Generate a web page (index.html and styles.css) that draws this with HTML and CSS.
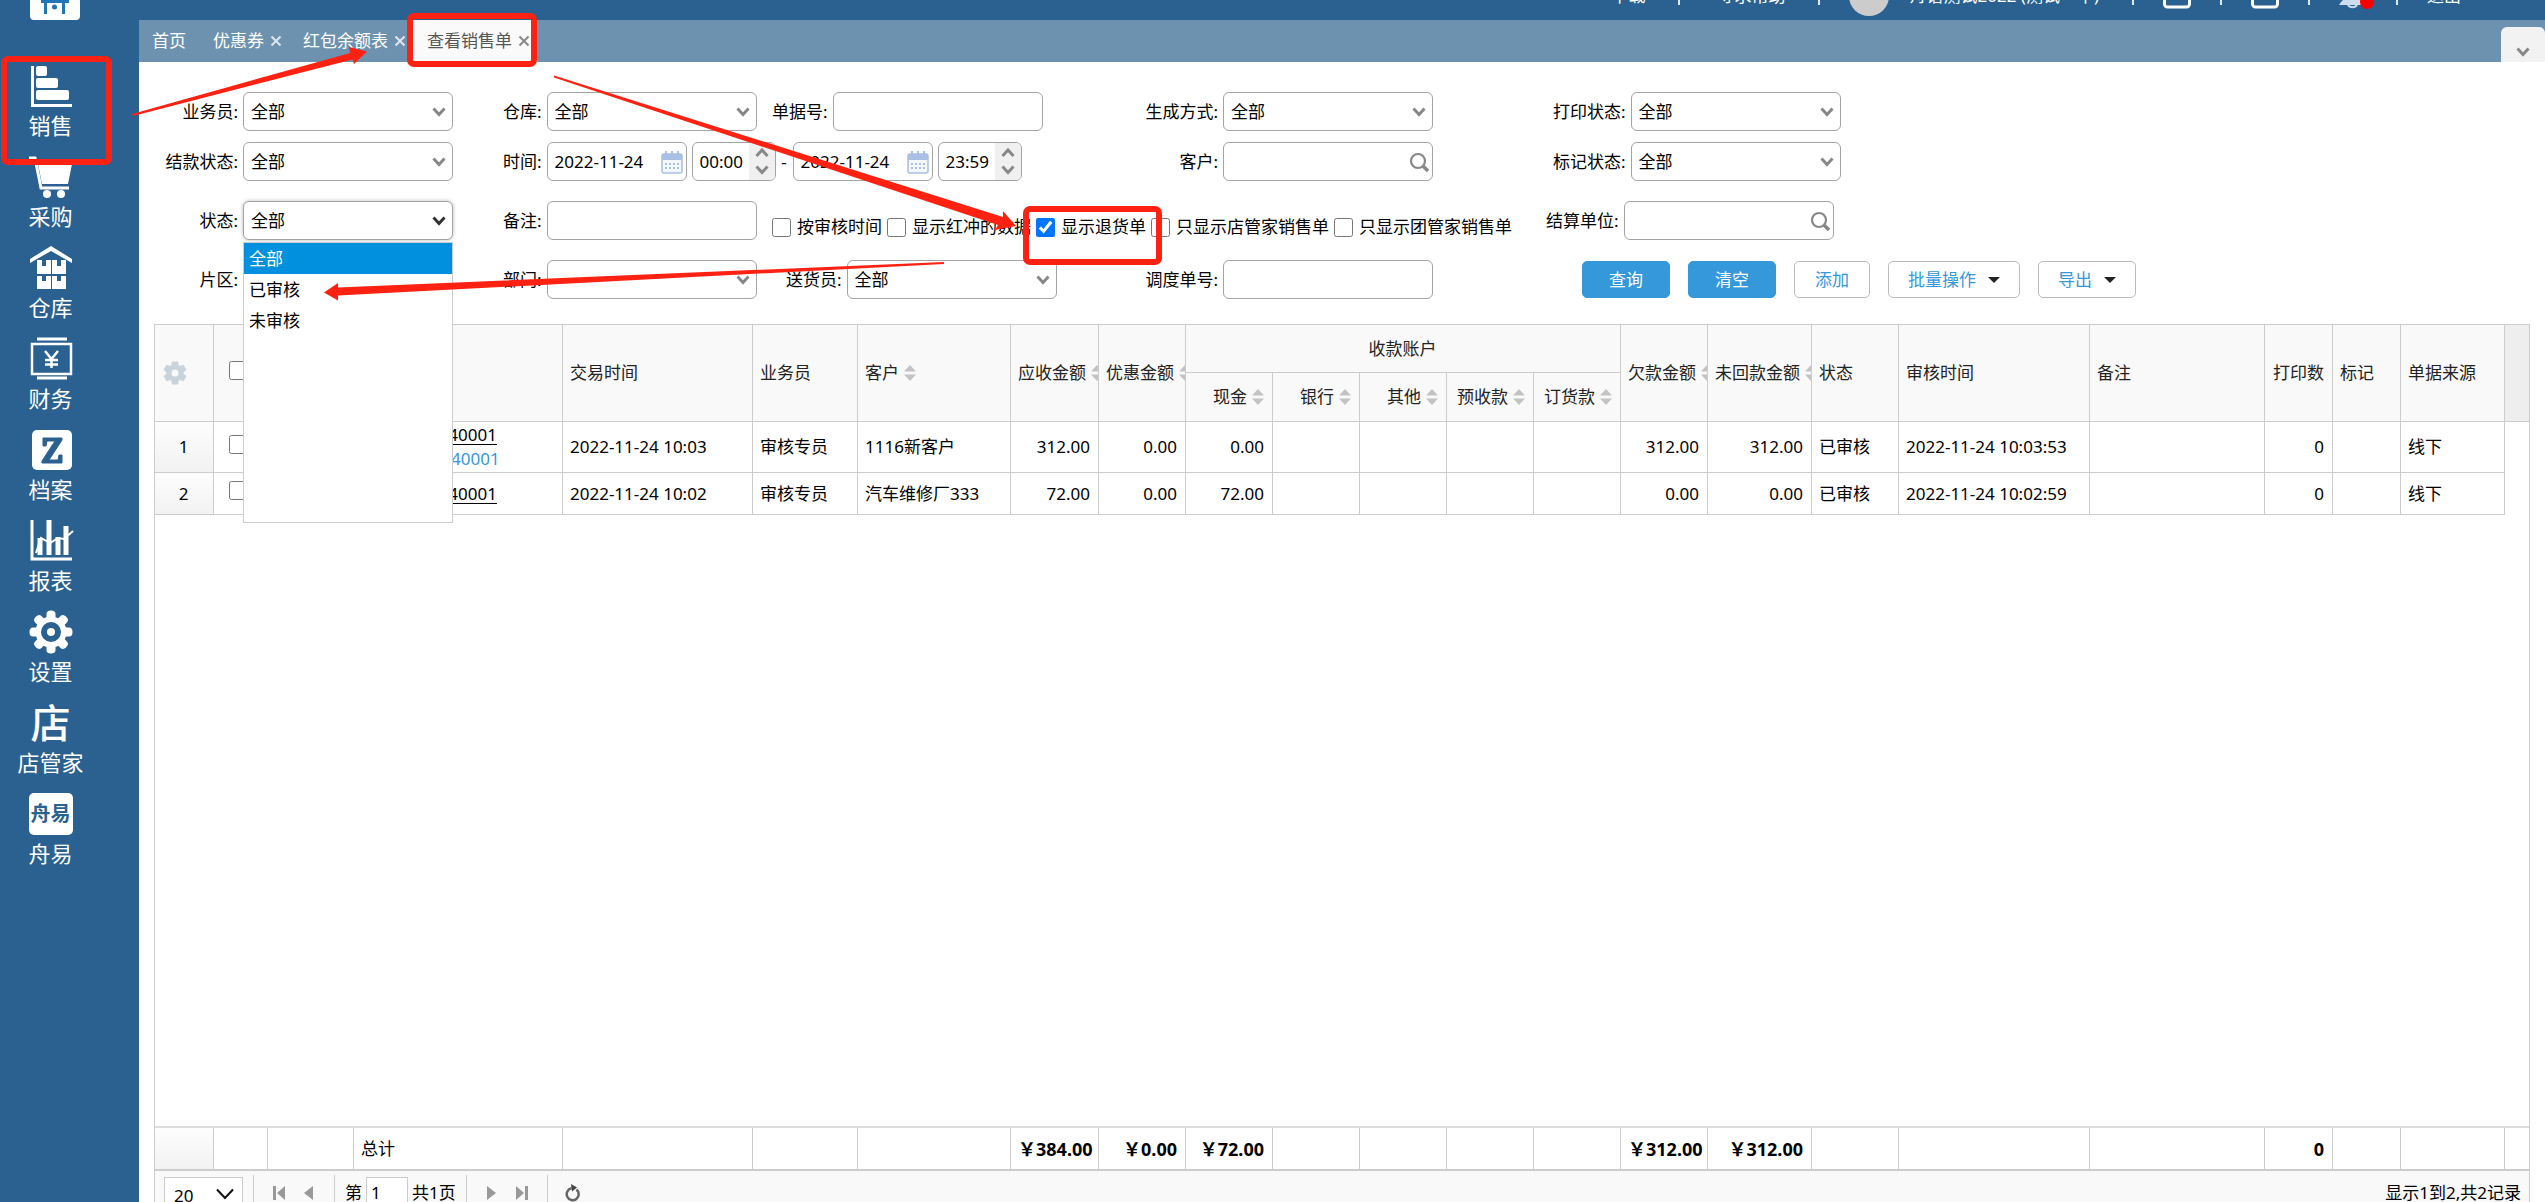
FILE: index.html
```html
<!DOCTYPE html>
<html lang="zh-CN">
<head>
<meta charset="utf-8">
<title>查看销售单</title>
<link rel="stylesheet" href="styles.css">
</head>
<body>
<svg class="defs" aria-hidden="true">
  <symbol id="chev" viewBox="0 0 14 10"><path d="M1.5 1.5 7 7.5l5.500-6" fill="none" stroke="currentColor" stroke-width="3"/></symbol>
  <symbol id="chev-thin" viewBox="0 0 18 12"><path d="M1 1.500l8 8.500 8-8.500" fill="none" stroke="currentColor" stroke-width="2"/></symbol>
  <symbol id="chev-up" viewBox="0 0 14 10"><path d="M1.500 8 7 2l5.500 6" fill="none" stroke="currentColor" stroke-width="3"/></symbol>
  <symbol id="close" viewBox="0 0 12 12"><path d="M1.500 1.500l9 9m0-9l-9 9" stroke="currentColor" stroke-width="2"/></symbol>
  <symbol id="search" viewBox="0 0 20 20"><circle cx="9" cy="9" r="7" fill="none" stroke="#888" stroke-width="2.200"/><path d="M14 14l5 5" stroke="#888" stroke-width="3.500"/></symbol>
  <symbol id="sort" viewBox="0 0 12 16"><path d="M6 0l6 6.500H0zM6 16l6-6.500H0z" fill="#c3c3c3"/></symbol>
  <symbol id="cal" viewBox="0 0 22 23"><rect x="1" y="3" width="20" height="19" rx="2" fill="#f4f7fc" stroke="#a9bfe3" stroke-width="1.500"/><path d="M1 3h20v6H1z" fill="#a9bfe3"/><path d="M5 0v5M11 0v5M17 0v5" stroke="#a9bfe3" stroke-width="2"/><path d="M4 13h14M4 17h14" stroke="#a9bfe3" stroke-width="2" stroke-dasharray="2 2"/></symbol>
</svg>

<div class="app">
  <aside class="sidebar">
    <div class="logo"><svg width="50" height="20" viewBox="0 0 50 20"><rect y="-10" width="50" height="30" rx="4" fill="#fff"/><path d="M11 1.500h28M15.500 1v13M33.500 1v13" stroke="#1f76b8" stroke-width="3" fill="none"/><circle cx="24.500" cy="7" r="2.500" fill="#1f76b8"/></svg></div>
    <nav>
      <a href="#"><svg width="44" height="42" viewBox="0 0 44 42" fill="#fff"><path d="M2 1h3v38h38v3H2z"/><rect x="7" y="1" width="11" height="10" rx="2"/><rect x="7" y="13" width="22" height="10" rx="2"/><rect x="7" y="25" width="33" height="10" rx="2"/></svg><span>销售</span></a>
      <a href="#"><svg width="44" height="42" viewBox="0 0 44 42"><path d="M0 2h6l6 30h28" fill="none" stroke="#fff" stroke-width="3"/><path d="M9 8h34l-4 20H13z" fill="#fff"/><circle cx="18" cy="38" r="4" fill="#fff"/><circle cx="32" cy="38" r="4" fill="#fff"/></svg><span>采购</span></a>
      <a href="#"><svg width="44" height="42" viewBox="0 0 44 42" fill="#fff"><path d="M1 12L22-1l21 13v4L22 4 1 16z"/><path d="M8 13h5v6h4v-6h5v14H8zM23 13h5v6h4v-6h5v14H23zM8 29h5v5h4v-5h5v13H8zM23 29h5v5h4v-5h5v13H23z"/></svg><span>仓库</span></a>
      <a href="#"><svg width="44" height="42" viewBox="0 0 44 42"><path d="M8 1h30M8 40h30" stroke="#fff" stroke-width="3"/><rect x="3" y="6" width="39" height="30" fill="none" stroke="#fff" stroke-width="2.500"/><path d="M16 13l6.500 8 6.500-8M22.500 21v9M16 22h13M16 26.500h13" fill="none" stroke="#fff" stroke-width="2.500"/></svg><span>财务</span></a>
      <a href="#"><svg width="44" height="42" viewBox="0 0 44 42"><rect x="3" y="1" width="40" height="40" rx="5" fill="#fff"/><path d="M14 9h19v2L20 31h9l1-5h3v8H13v-2L26 12h-8l-1 5h-3z" fill="#2a6190" stroke="#2a6190"/></svg><span>档案</span></a>
      <a href="#"><svg width="44" height="42" viewBox="0 0 44 42" fill="none" stroke="#fff"><path d="M3 0v39h40" stroke-width="3"/><path d="M11 18v17M20 0v35M29 17v18M37 6v29" stroke-width="5"/><path d="M7 33l5-15 9 5 8-5 6 1 9-8" stroke-width="2"/></svg><span>报表</span></a>
      <a href="#"><svg width="44" height="42" viewBox="-22 -21 44 42"><g fill="#fff"><circle r="15.500"/><path id="tooth" d="M-4.500-18a4.500 3.500 0 0 1 9 0v6h-9z"/><use href="#tooth" transform="rotate(45)"/><use href="#tooth" transform="rotate(90)"/><use href="#tooth" transform="rotate(135)"/><use href="#tooth" transform="rotate(180)"/><use href="#tooth" transform="rotate(225)"/><use href="#tooth" transform="rotate(270)"/><use href="#tooth" transform="rotate(315)"/></g><circle r="7" fill="#fff" stroke="#2a6190" stroke-width="6"/></svg><span>设置</span></a>
      <a href="#"><b class="glyph" aria-hidden="true">店</b><span>店管家</span></a>
      <a href="#"><b class="glyph glyph-box" aria-hidden="true">舟易</b><span>舟易</span></a>
    </nav>
  </aside>

  <div class="main">
    <header class="topbar">
      <div class="topnav">
        <a href="#">下载</a><i></i><a href="#">寻求帮助</a><i></i>
        <span class="avatar"></span><span class="user">舟谱测试2022 (测试一中)</span><i></i>
        <svg width="28" height="28" viewBox="0 0 28 28"><rect x="1.500" y="4" width="25" height="21" rx="3" fill="none" stroke="#fff" stroke-width="3"/></svg><i></i>
        <svg width="28" height="28" viewBox="0 0 28 28"><rect x="1.500" y="4" width="25" height="21" rx="3" fill="none" stroke="#fff" stroke-width="3"/></svg><i></i>
        <svg width="28" height="28" viewBox="0 0 28 28"><path d="M2 20c4-3 3-8 4-12 1-6 15-6 16 0 1 4 0 9 4 12v3H0z" fill="#cfdcee"/><path d="M9 23a5 4 0 0 0 9 0" fill="none" stroke="#cfdcee" stroke-width="2"/><circle cx="28" cy="20" r="7" fill="#f00"/></svg><i></i>
        <a href="#">退出</a>
      </div>
    </header>

    <div class="tabs">
      <a class="tab home" href="#">首页</a>
      <a class="tab" href="#">优惠券<svg><use href="#close"/></svg></a>
      <a class="tab" href="#">红包余额表<svg><use href="#close"/></svg></a>
      <a class="tab active" href="#">查看销售单<svg><use href="#close"/></svg></a>
      <button class="collapse" aria-label="展开"><svg><use href="#chev"/></svg></button>
    </div>

    <main class="content">
      <form class="filters">
        <div class="row">
          <div class="field c1"><label for="f1">业务员:</label><span class="box"><select id="f1"><option>全部</option></select><svg class="chev"><use href="#chev"/></svg></span></div>
          <div class="field c2"><label for="f2">仓库:</label><span class="box"><select id="f2"><option>全部</option></select><svg class="chev"><use href="#chev"/></svg></span></div>
          <div class="field c3"><label for="f3">单据号:</label><span class="box"><input id="f3" type="text"></span></div>
          <div class="field c4"><label for="f4">生成方式:</label><span class="box"><select id="f4"><option>全部</option></select><svg class="chev"><use href="#chev"/></svg></span></div>
          <div class="field c5"><label for="f5">打印状态:</label><span class="box"><select id="f5"><option>全部</option></select><svg class="chev"><use href="#chev"/></svg></span></div>
        </div>
        <div class="row">
          <div class="field c1"><label for="f6">结款状态:</label><span class="box"><select id="f6"><option>全部</option></select><svg class="chev"><use href="#chev"/></svg></span></div>
          <div class="field time"><label for="f7">时间:</label>
            <span class="box date"><input id="f7" type="text" value="2022-11-24"><svg class="cal"><use href="#cal"/></svg></span>
            <span class="box clock"><input type="text" value="00:00" aria-label="开始时间"><span class="spin"><svg><use href="#chev-up"/></svg><svg><use href="#chev"/></svg></span></span>
            <span class="dash">-</span>
            <span class="box date"><input type="text" value="2022-11-24" aria-label="结束日期"><svg class="cal"><use href="#cal"/></svg></span>
            <span class="box clock"><input type="text" value="23:59" aria-label="结束时间"><span class="spin"><svg><use href="#chev-up"/></svg><svg><use href="#chev"/></svg></span></span>
          </div>
          <div class="field c4"><label for="f8">客户:</label><span class="box"><input id="f8" type="text"><svg class="mag"><use href="#search"/></svg></span></div>
          <div class="field c5"><label for="f9">标记状态:</label><span class="box"><select id="f9"><option>全部</option></select><svg class="chev"><use href="#chev"/></svg></span></div>
        </div>
        <div class="row spaced">
          <div class="field c1"><label for="f10">状态:</label><span class="box open"><select id="f10"><option>全部</option><option>已审核</option><option>未审核</option></select><svg class="chev"><use href="#chev"/></svg>
            <ul class="dropdown"><li class="on">全部</li><li>已审核</li><li>未审核</li></ul></span></div>
          <div class="field c2"><label for="f11">备注:</label><span class="box"><input id="f11" type="text"></span></div>
          <div class="flow c3">
            <div class="checks">
              <label><input type="checkbox">按审核时间</label>
              <label><input type="checkbox">显示红冲的数据</label>
              <label><input type="checkbox" checked>显示退货单</label>
              <label><input type="checkbox">只显示店管家销售单</label>
              <label><input type="checkbox">只显示团管家销售单</label>
            </div>
            <div class="field"><label for="f12">结算单位:</label><span class="box"><input id="f12" type="text"><svg class="mag"><use href="#search"/></svg></span></div>
          </div>
        </div>
        <div class="row spaced">
          <div class="field c1"><label for="f13">片区:</label><span class="box"><select id="f13"><option></option></select></span></div>
          <div class="field c2"><label for="f14">部门:</label><span class="box"><select id="f14"><option></option></select><svg class="chev"><use href="#chev"/></svg></span></div>
          <div class="field c3 inset"><label for="f15">送货员:</label><span class="box"><select id="f15"><option>全部</option></select><svg class="chev"><use href="#chev"/></svg></span></div>
          <div class="field c4"><label for="f16">调度单号:</label><span class="box"><input id="f16" type="text"></span></div>
          <div class="actions">
            <button type="button" class="btn primary">查询</button>
            <button type="button" class="btn primary">清空</button>
            <button type="button" class="btn">添加</button>
            <button type="button" class="btn menu">批量操作<span class="caret"></span></button>
            <button type="button" class="btn menu">导出<span class="caret"></span></button>
          </div>
        </div>
      </form>

      <section class="grid">
        <table class="data">
          <colgroup><col class="w59"><col class="w54"><col class="w86"><col class="w209"><col class="w190"><col class="w105"><col class="w153"><col class="w88"><col class="w87" span="7"><col class="w104"><col class="w87"><col class="w191"><col class="w175"><col class="w68" span="2"><col class="w104"><col></colgroup>
          <thead>
            <tr>
              <th rowspan="2" class="gear"><svg width="24" height="24" viewBox="-12 -12 24 24"><g fill="#c9d3dc"><circle r="8.500"/><path id="gt" d="M-3-11.500h6l1 5h-8z"/><use href="#gt" transform="rotate(60)"/><use href="#gt" transform="rotate(120)"/><use href="#gt" transform="rotate(180)"/><use href="#gt" transform="rotate(240)"/><use href="#gt" transform="rotate(300)"/></g><circle r="3.500" fill="#f9f9f9"/></svg></th>
              <th rowspan="2" class="pick"><input type="checkbox" aria-label="全选"></th>
              <th rowspan="2"></th><th rowspan="2">单据号</th><th rowspan="2">交易时间</th><th rowspan="2">业务员</th>
              <th rowspan="2">客户<svg class="sort"><use href="#sort"/></svg></th>
              <th rowspan="2">应收金额<svg class="sort"><use href="#sort"/></svg></th>
              <th rowspan="2">优惠金额<svg class="sort"><use href="#sort"/></svg></th>
              <th colspan="5" class="mid">收款账户</th>
              <th rowspan="2">欠款金额<svg class="sort"><use href="#sort"/></svg></th>
              <th rowspan="2">未回款金额<svg class="sort"><use href="#sort"/></svg></th>
              <th rowspan="2">状态</th><th rowspan="2">审核时间</th><th rowspan="2">备注</th>
              <th rowspan="2" class="num">打印数</th><th rowspan="2">标记</th><th rowspan="2">单据来源</th><th rowspan="2" class="gutter"></th>
            </tr>
            <tr class="sub">
              <th class="num">现金<svg class="sort"><use href="#sort"/></svg></th>
              <th class="num">银行<svg class="sort"><use href="#sort"/></svg></th>
              <th class="num">其他<svg class="sort"><use href="#sort"/></svg></th>
              <th class="num">预收款<svg class="sort"><use href="#sort"/></svg></th>
              <th class="num">订货款<svg class="sort"><use href="#sort"/></svg></th>
            </tr>
          </thead>
          <tbody>
            <tr class="tall">
              <td class="no">1</td><td class="pick"><input type="checkbox" aria-label="选择第1行"></td><td></td>
              <td class="docs"><a href="#">XS202211240001</a><a class="ref" href="#">TH202211240001</a></td>
              <td>2022-11-24 10:03</td><td>审核专员</td><td>1116新客户</td>
              <td class="num">312.00</td><td class="num">0.00</td><td class="num">0.00</td><td></td><td></td><td></td><td></td>
              <td class="num">312.00</td><td class="num">312.00</td><td>已审核</td><td>2022-11-24 10:03:53</td><td></td><td class="num">0</td><td></td><td>线下</td><td class="gutter"></td>
            </tr>
            <tr>
              <td class="no">2</td><td class="pick"><input type="checkbox" aria-label="选择第2行"></td><td></td>
              <td class="docs"><a href="#">XS202211240001</a></td>
              <td>2022-11-24 10:02</td><td>审核专员</td><td>汽车维修厂333</td>
              <td class="num">72.00</td><td class="num">0.00</td><td class="num">72.00</td><td></td><td></td><td></td><td></td>
              <td class="num">0.00</td><td class="num">0.00</td><td>已审核</td><td>2022-11-24 10:02:59</td><td></td><td class="num">0</td><td></td><td>线下</td><td class="gutter"></td>
            </tr>
          </tbody>
        </table>
        <div class="blank"></div>
        <table class="data totals">
          <colgroup><col class="w59"><col class="w54"><col class="w86"><col class="w209"><col class="w190"><col class="w105"><col class="w153"><col class="w88"><col class="w87" span="7"><col class="w104"><col class="w87"><col class="w191"><col class="w175"><col class="w68" span="2"><col class="w104"><col></colgroup>
          <tbody>
            <tr>
              <td class="no"></td><td></td><td></td><td class="plain">总计</td><td></td><td></td><td></td>
              <td class="num">￥384.00</td><td class="num">￥0.00</td><td class="num">￥72.00</td><td></td><td></td><td></td><td></td>
              <td class="num">￥312.00</td><td class="num">￥312.00</td><td></td><td></td><td></td><td class="num">0</td><td></td><td></td><td class="gutter"></td>
            </tr>
          </tbody>
        </table>
        <footer class="pager">
          <span class="size"><select aria-label="每页条数"><option>20</option></select><svg><use href="#chev-thin"/></svg></span>
          <i></i>
          <button aria-label="首页"><svg width="12" height="14" viewBox="0 0 12 14"><path d="M0 0h3v14H0zM12 0v14L4 7z" fill="#999"/></svg></button>
          <button aria-label="上一页"><svg width="12" height="14" viewBox="0 0 12 14"><path d="M10 0v14L1 7z" fill="#999"/></svg></button>
          <i></i>
          <label>第<input type="text" value="1"></label><span>共1页</span>
          <i></i>
          <button aria-label="下一页"><svg width="12" height="14" viewBox="0 0 12 14"><path d="M1 0v14l9-7z" fill="#999"/></svg></button>
          <button aria-label="末页"><svg width="12" height="14" viewBox="0 0 12 14"><path d="M0 0v14l8-7zM9 0h3v14H9z" fill="#999"/></svg></button>
          <i></i>
          <button aria-label="刷新"><svg width="16" height="18" viewBox="0 0 16 18"><path d="M11.500 5.500a6 6 0 1 1-5-1.200" fill="none" stroke="#666" stroke-width="2.500"/><path d="M6 0l6 3.500-5 4z" fill="#444"/></svg></button>
          <span class="info">显示1到2,共2记录</span>
        </footer>
      </section>
    </main>
  </div>
</div>

<svg class="marks" width="1200" height="320" viewBox="0 0 1200 320" aria-hidden="true">
  <g fill="none" stroke="#ff2212" stroke-width="6">
    <rect x="4" y="59" width="105" height="103" rx="4"/>
    <rect x="410" y="16" width="124" height="48" rx="4"/>
    <rect x="1026" y="209" width="133" height="53" rx="4"/>
  </g>
  <g fill="#ff2212">
    <path d="M133 116l-1-2L350 53l-1-6 18 4.500L354 64l-1.500-4.500z"/>
    <path d="M554 77.500v-2l449 141.500v-6l13 15-21 4 3-5z"/>
    <path d="M944 262v2L338 295.500v5L324 292.500 338 283v4.500z"/>
  </g>
</svg>
</body>
</html>
```
FILE: styles.css
```css
* { box-sizing: border-box; }
body {
  margin: 0;
  font: 17px/24px "Noto Sans", "Noto Sans CJK SC", sans-serif;
  color: #000;
  background: #fff;
}
a { color: inherit; text-decoration: none; }
button, input, select { font: inherit; color: inherit; }
svg { flex: none; }
.defs { position: absolute; width: 0; height: 0; }

.app { display: flex; height: 100vh; overflow: hidden; }

/* Sidebar */
.sidebar { flex: 0 0 139px; background: #2a6190; color: #fff; }
.logo { height: 65px; padding-left: 30px; }
.logo svg { display: block; }
.sidebar nav { width: 101px; }
.sidebar nav a {
  display: flex;
  flex-direction: column;
  align-items: center;
  gap: 3px;
  height: 91px;
  font-size: 22px;
  line-height: 30px;
}
.sidebar nav svg { overflow: visible; }
.glyph { height: 42px; font-size: 40px; line-height: 42px; font-weight: 500; }
.glyph-box {
  width: 44px;
  background: #fff;
  border-radius: 5px;
  color: #2a6190;
  font-size: 20px;
  font-weight: 700;
  text-align: center;
}

.main { flex: 1; min-width: 0; display: flex; flex-direction: column; }

/* Top bar */
.topbar {
  flex: 0 0 20px;
  display: flex;
  justify-content: flex-end;
  align-items: flex-end;
  overflow: hidden;
  background: #2a6190;
  color: #fff;
  padding-right: 84px;
}
.topnav { flex: none; display: flex; align-items: center; height: 48px; white-space: nowrap; }
.topnav i { width: 2px; height: 18px; margin: 0 29px; background: #dfe8f0; }
.topnav a:not(:last-child) { padding: 0 4px 0 8px; }
.topnav svg { overflow: visible; }
.avatar { width: 40px; height: 40px; border-radius: 50%; background: #ccc; margin-right: 20px; }
.user { margin-right: 4px; }

/* Tabs */
.tabs { flex: 0 0 42px; display: flex; background: #6d92b0; color: #fff; }
.tab { display: flex; align-items: center; gap: 6px; padding: 0 7px 0 14px; }
.tab.home { padding: 0 13px; }
.tab svg { width: 12px; height: 12px; color: #dce6ee; }
.tab.active { background: #fafafa; color: #555; }
.tab.active svg { color: #888; }
.collapse {
  width: 44px;
  height: 35px;
  margin: 7px 0 0 auto;
  padding: 12px 0 0;
  border: 0;
  border-radius: 6px 6px 0 0;
  background: #f2f2f2;
  color: #888;
}
.collapse svg { width: 14px; height: 10px; }

/* Filters */
.content {
  flex: 1;
  min-height: 0;
  display: flex;
  flex-direction: column;
  gap: 25px;
  padding: 30px 15px 0;
}
.row { display: flex; height: 39px; margin-top: 11px; white-space: nowrap; }
.row:first-child { margin-top: 0; }
.row.spaced { margin-top: 20px; }
.field { display: flex; align-items: center; gap: 5px; }
.c1 { width: 299px; justify-content: flex-end; margin-right: 50px; }
.c2 { width: 269px; }
.c3 { width: 269px; }
.c4 { width: 392px; justify-content: flex-end; margin-right: 120px; }
.inset { padding-left: 14px; }
.time { width: 538px; }
.box { position: relative; flex: none; width: 210px; height: 39px; }
.box > select, .box > input {
  display: block;
  width: 100%;
  height: 100%;
  padding: 0 7px;
  border: 1px solid #a3a3a3;
  border-radius: 6px;
  background: #fff;
  appearance: none;
  outline: 0;
}
.chev { position: absolute; right: 7px; top: 15px; width: 14px; height: 10px; color: #888; }
.mag { position: absolute; right: 4px; top: 10px; width: 20px; height: 20px; }
.cal { position: absolute; right: 4px; top: 9px; width: 22px; height: 23px; }
.open .chev { color: #333; }
.open > select { box-shadow: 0 0 4px #bbb; }
.date { width: 140px; }
.clock { width: 84px; }
.dash { width: 7px; text-align: center; }
.spin {
  position: absolute;
  top: 1px;
  right: 1px;
  bottom: 1px;
  width: 26px;
  display: flex;
  flex-direction: column;
  align-items: center;
  justify-content: space-between;
  padding: 5px 0;
  border-radius: 0 5px 5px 0;
  background: #f0f0f0;
  color: #888;
}
.spin svg { width: 14px; height: 10px; }
.dropdown {
  position: absolute;
  z-index: 2;
  left: 0;
  top: 41px;
  width: 210px;
  height: 281px;
  margin: 0;
  padding: 0;
  list-style: none;
  border: 1px solid #ccc;
  background: #fff;
}
.dropdown li { padding: 0 5px; line-height: 31px; }
.dropdown .on { background: #0090dd; color: #fff; }
.flow { display: flex; gap: 34px; }
.checks { display: flex; gap: 5px; align-self: flex-end; height: 26px; }
.checks label { display: flex; align-items: center; gap: 6px; }
input[type="checkbox"] { width: 19px; height: 19px; margin: 0; }
.actions { display: flex; align-items: center; gap: 18px; margin-left: 29px; }
.btn {
  height: 37px;
  width: 76px;
  padding: 0;
  border: 1px solid #bbb;
  border-radius: 5px;
  background: #fff;
  color: #3498db;
}
.btn.primary { width: 88px; background: #3498db; border-color: #3498db; color: #fff; }
.btn.menu { width: auto; padding: 0 19px; }
.caret {
  display: inline-block;
  margin-left: 12px;
  vertical-align: 3px;
  border: 6px solid transparent;
  border-top-color: #222;
  border-bottom: 0;
}

/* Grid */
.grid {
  flex: 1;
  min-height: 0;
  display: flex;
  flex-direction: column;
  border: 1px solid #ccc;
  border-bottom: 0;
}
.data { width: 100%; table-layout: fixed; border-collapse: separate; border-spacing: 0; }
.w54 { width: 54px; }
.w59 { width: 59px; }
.w68 { width: 68px; }
.w86 { width: 86px; }
.w87 { width: 87px; }
.w88 { width: 88px; }
.w104 { width: 104px; }
.w105 { width: 105px; }
.w153 { width: 153px; }
.w175 { width: 175px; }
.w190 { width: 190px; }
.w191 { width: 191px; }
.w209 { width: 209px; }
.data th, .data td {
  height: 42px;
  padding: 0 8px 0 7px;
  border-right: 1px solid #ccc;
  border-bottom: 1px solid #ccc;
  font-weight: 400;
  text-align: left;
  white-space: nowrap;
  overflow: hidden;
}
.data th { height: 48px; background: #f9f9f9; color: #222; }
.data .sub th { height: 49px; }
.data .num { text-align: right; }
.data .mid { text-align: center; }
.data .tall td { height: 51px; }
.data .pick { padding-left: 15px; }
.data .gear { padding-left: 8px; }
.data .gear svg { display: block; }
.data td.no { text-align: center; background: linear-gradient(#fdfdfd, #f2f2f2); }
.data .gutter { border: 0; padding: 0; }
.data th.gutter { background: #eee; border-bottom: 1px solid #ccc; }
.sort { width: 12px; height: 16px; margin-left: 5px; vertical-align: -2px; }
.docs a { display: block; width: max-content; text-decoration: underline; text-underline-offset: 3px; }
.docs .ref { color: #3498db; text-decoration: none; }
.blank { flex: 1; }
.totals { border-top: 2px solid #ddd; }
.data.totals td { height: 43px; border-bottom: 2px solid #ccc; font-size: 18px; font-weight: 700; }
.data.totals .plain { font-size: 17px; font-weight: 400; }

/* Pager */
.pager {
  flex: 0 0 31px;
  display: flex;
  align-items: flex-start;
  overflow: hidden;
  padding: 4px 8px 0 9px;
  background: #f9f9f9;
  line-height: 36px;
}
.pager i { width: 1px; height: 38px; margin: 0 10px; background: #ccc; }
.pager label { display: flex; gap: 4px; margin-right: 4px; }
.pager input, .size select {
  height: 32px;
  margin-top: 2px;
  border: 1px solid #ccc;
  background: #fff;
  border-radius: 0;
  outline: 0;
}
.pager input { width: 42px; padding: 0 4px; }
.size { position: relative; }
.size select { display: block; width: 79px; padding: 0 9px; appearance: none; }
.size svg { position: absolute; right: 9px; top: 13px; width: 18px; height: 12px; color: #111; }
.pager button { width: 30px; height: 36px; padding: 0; border: 0; background: none; }
.pager button svg { display: block; margin: 0 auto; }
.info { margin-left: auto; }

/* Annotations over the page */
.marks { position: absolute; left: 0; top: 0; z-index: 5; pointer-events: none; }
```
